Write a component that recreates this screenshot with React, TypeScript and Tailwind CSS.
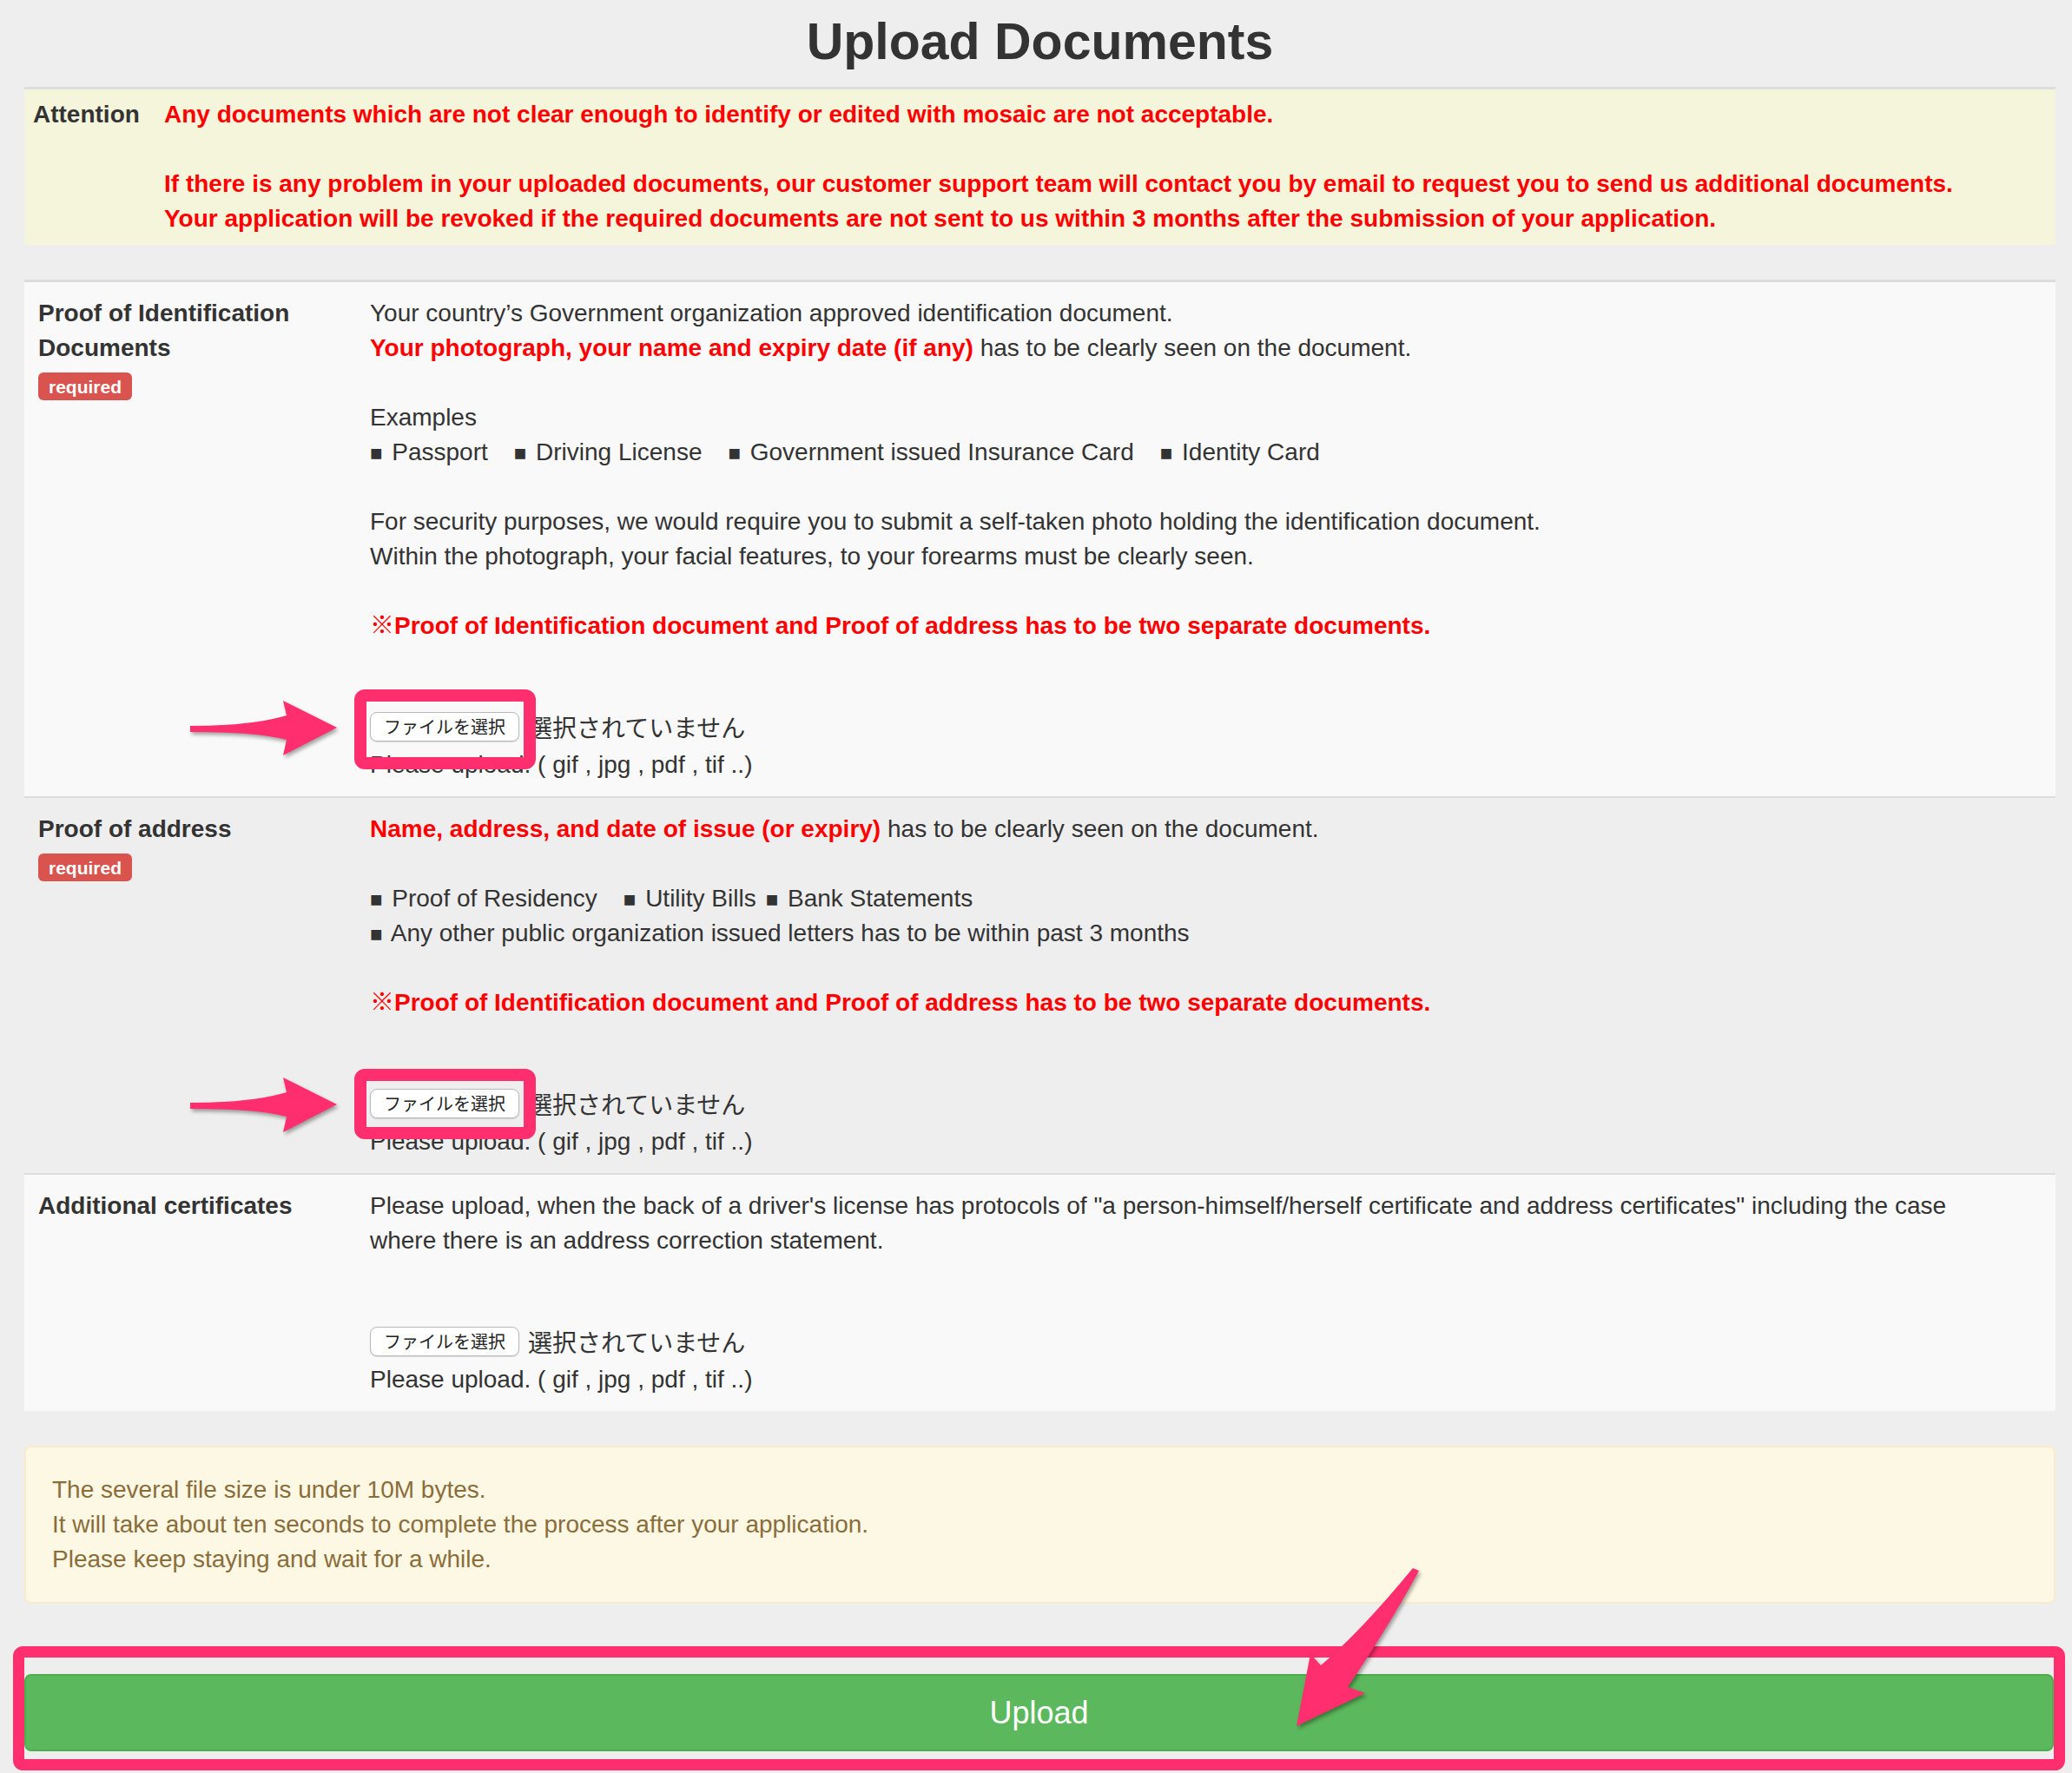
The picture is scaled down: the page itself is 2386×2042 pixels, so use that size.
const red = "font-bold text-[#ff0000]";

function Bullet({ children, gap }: { children: React.ReactNode; gap: string }) {
  return (
    <span className={gap}>
      <span className="mr-[3px] text-[24px] leading-none">■</span> {children}
    </span>
  );
}

function FileField() {
  return (
    <>
      <div className="mt-[72px] flex h-[48px] items-center">
        <div className="flex h-[34px] w-[172px] items-center justify-center rounded-[8px] border border-[#b9b9b9] bg-white font-['Noto_Sans_CJK_JP',sans-serif] text-[20px] leading-none text-[#222] shadow-[0_1px_1px_rgba(0,0,0,0.12)]">
          ファイルを選択
        </div>
        <span className="ml-[10px] font-['Noto_Sans_CJK_JP',sans-serif] text-[28px] text-[#333]">
          選択されていません
        </span>
      </div>
      <div>Please upload. ( gif , jpg , pdf , tif ..)</div>
    </>
  );
}

function Label({ title, required }: { title: string; required?: boolean }) {
  return (
    <div className="w-[382px] shrink-0 px-[16px] pt-[16px] font-bold">
      <div className="w-[350px]">{title}</div>
      {required && (
        <div className="mt-[8px] inline-flex h-[32px] items-center rounded-[6px] bg-[#d9534f] px-[12px] text-[21px] font-bold leading-none text-white">
          required
        </div>
      )}
    </div>
  );
}

export default function App() {
  return (
    <div className="relative min-h-[2042px] bg-[#eeeeee] font-['Liberation_Sans','Noto_Sans_CJK_JP',sans-serif] text-[28px] leading-[40px] text-[#333]">
      <div className="ml-[28px] w-[2339px] pt-[15px]">
        <h1 className="text-center text-[59px] font-bold leading-[66px] text-[#333]">
          Upload Documents
        </h1>

        {/* Attention */}
        <div className="mt-[19px] flex border-t-[3px] border-[#dddddd] bg-[#f5f5dc] pt-[9px] pb-[10px]">
          <div className="w-[151px] shrink-0 pl-[10px] font-bold">Attention</div>
          <div className={"pl-[10px] " + red}>
            <div>Any documents which are not clear enough to identify or edited with mosaic are not acceptable.</div>
            <div>&nbsp;</div>
            <div>
              If there is any problem in your uploaded documents, our customer support team will contact you by email to request you to send us additional documents.
            </div>
            <div>
              Your application will be revoked if the required documents are not sent to us within 3 months after the submission of your application.
            </div>
          </div>
        </div>

        {/* Documents table */}
        <div className="mt-[40px] border-t-[3px] border-[#dddddd]">
          <div className="flex bg-[#f9f9f9]">
            <Label title="Proof of Identification Documents" required />
            <div className="flex-1 px-[16px] py-[16px]">
              <div>Your country’s Government organization approved identification document.</div>
              <div>
                <span className={red}>Your photograph, your name and expiry date (if any)</span> has to be clearly seen on the document.
              </div>
              <div>&nbsp;</div>
              <div>Examples</div>
              <div>
                <Bullet gap="mr-[30px]">Passport</Bullet>
                <Bullet gap="mr-[30px]">Driving License</Bullet>
                <Bullet gap="mr-[30px]">Government issued Insurance Card</Bullet>
                <Bullet gap="">Identity Card</Bullet>
              </div>
              <div>&nbsp;</div>
              <div>For security purposes, we would require you to submit a self-taken photo holding the identification document.</div>
              <div>Within the photograph, your facial features, to your forearms must be clearly seen.</div>
              <div>&nbsp;</div>
              <div className={red}>※Proof of Identification document and Proof of address has to be two separate documents.</div>
              <FileField />
            </div>
          </div>

          <div className="flex border-t-[2px] border-[#dddddd]">
            <Label title="Proof of address" required />
            <div className="flex-1 px-[16px] py-[16px]">
              <div>
                <span className={red}>Name, address, and date of issue (or expiry)</span> has to be clearly seen on the document.
              </div>
              <div>&nbsp;</div>
              <div>
                <Bullet gap="mr-[30px]">Proof of Residency</Bullet>
                <Bullet gap="mr-[11px]">Utility Bills</Bullet>
                <Bullet gap="">Bank Statements</Bullet>
              </div>
              <div>
                <Bullet gap="">Any other public organization issued letters has to be within past 3 months</Bullet>
              </div>
              <div>&nbsp;</div>
              <div className={red}>※Proof of Identification document and Proof of address has to be two separate documents.</div>
              <FileField />
            </div>
          </div>

          <div className="flex border-t-[2px] border-[#dddddd] bg-[#f9f9f9]">
            <Label title="Additional certificates" />
            <div className="flex-1 px-[16px] py-[16px]">
              <div>
                Please upload, when the back of a driver's license has protocols of "a person-himself/herself certificate and address certificates" including the case
                <br />
                where there is an address correction statement.
              </div>
              <FileField />
            </div>
          </div>
        </div>

        {/* Notice */}
        <div className="mt-[40px] rounded-[8px] border-2 border-[#faebcc] bg-[#fcf8e3] px-[30px] py-[29px] text-[#8a6d3b]">
          <div>The several file size is under 10M bytes.</div>
          <div>It will take about ten seconds to complete the process after your application.</div>
          <div>Please keep staying and wait for a while.</div>
        </div>

        <button className="mt-[81px] flex h-[89px] w-[2337px] items-center justify-center rounded-[8px] border-2 border-[#4cae4c] bg-[#5cb85c] text-[36px] text-white">
          Upload
        </button>
      </div>

      {/* annotations */}
      <svg
        className="pointer-events-none absolute left-0 top-0"
        width="2386"
        height="2042"
        viewBox="0 0 2386 2042"
      >
        <g fill="none" stroke="#ff2e6e">
          <rect x="415" y="801" width="195" height="78" rx="5" strokeWidth="14" />
          <rect x="415" y="1238" width="195" height="67" rx="5" strokeWidth="14" />
          <rect x="21.5" y="1902.5" width="2350" height="130" rx="5" strokeWidth="13" />
        </g>
        <g fill="#ff2e6e" className="drop-shadow-[2px_3px_2px_rgba(0,0,0,0.35)]">
          <path d="M219 836 Q290 836 330 824 L326 807 L388 838 L326 870 L330 852 Q296 843 219 843 Z" />
          <path d="M219 1270 Q290 1270 330 1258 L326 1241 L388 1272 L326 1304 L330 1286 Q296 1277 219 1277 Z" />
          <path d="M1627 1806 L1634 1809 Q1600 1872 1552 1943 L1572 1950 L1493 1988 L1509 1905 L1521 1918 Q1566 1880 1627 1806 Z" />
        </g>
      </svg>
    </div>
  );
}
